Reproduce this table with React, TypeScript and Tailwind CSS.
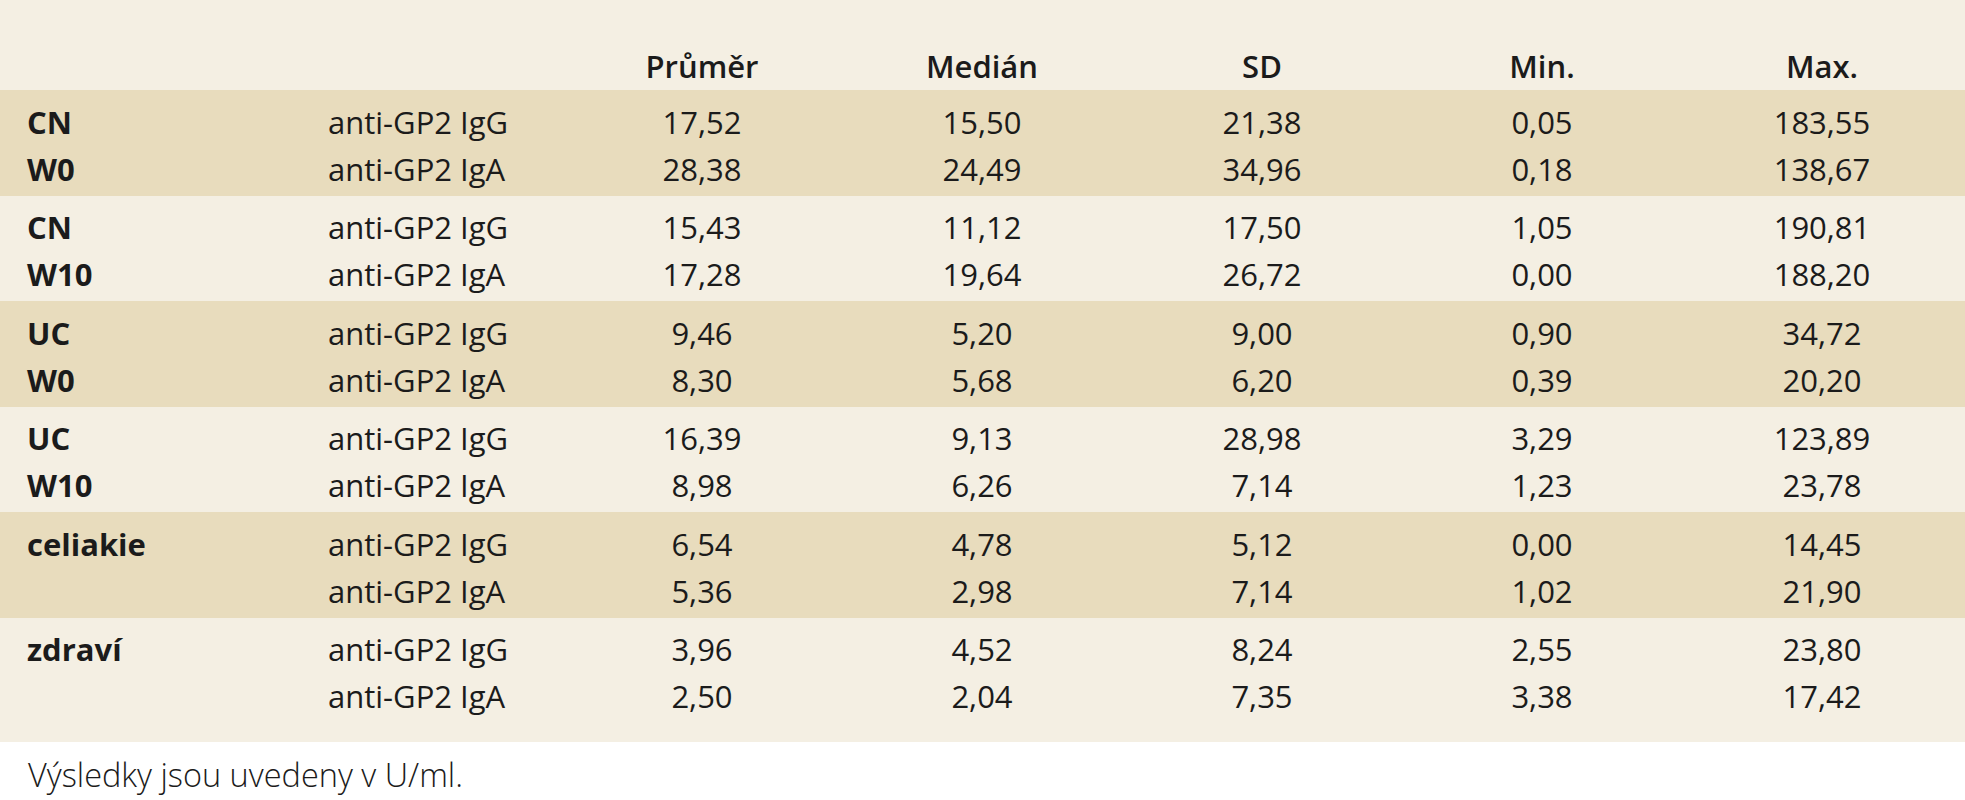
import React from "react";

type Group = { labels: [string, string]; rows: [string[], string[]] };

const groups: Group[] = [
  { labels: ["CN", "W0"], rows: [["17,52", "15,50", "21,38", "0,05", "183,55"], ["28,38", "24,49", "34,96", "0,18", "138,67"]] },
  { labels: ["CN", "W10"], rows: [["15,43", "11,12", "17,50", "1,05", "190,81"], ["17,28", "19,64", "26,72", "0,00", "188,20"]] },
  { labels: ["UC", "W0"], rows: [["9,46", "5,20", "9,00", "0,90", "34,72"], ["8,30", "5,68", "6,20", "0,39", "20,20"]] },
  { labels: ["UC", "W10"], rows: [["16,39", "9,13", "28,98", "3,29", "123,89"], ["8,98", "6,26", "7,14", "1,23", "23,78"]] },
  { labels: ["celiakie", ""], rows: [["6,54", "4,78", "5,12", "0,00", "14,45"], ["5,36", "2,98", "7,14", "1,02", "21,90"]] },
  { labels: ["zdraví", ""], rows: [["3,96", "4,52", "8,24", "2,55", "23,80"], ["2,50", "2,04", "7,35", "3,38", "17,42"]] },
];

const headers = ["Průměr", "Medián", "SD", "Min.", "Max."];
const antibodies = ["anti-GP2 IgG", "anti-GP2 IgA"];

const gridCols = "grid grid-cols-[328px_234px_280px_280px_280px_280px_280px]";

export default function App() {
  return (
    <div
      className="w-[1965px] h-[800px] bg-white text-[#1b1b1b] text-[31px] leading-[47px] overflow-hidden"
      style={{ fontFamily: '"Open Sans", "Noto Sans", sans-serif' }}
    >
      <div className="bg-[#f4efe3] pt-[43px]">
        <div className={`${gridCols} h-[47px] font-semibold`}>
          <div />
          <div />
          {headers.map((h) => (
            <div key={h} className="text-center">
              {h}
            </div>
          ))}
        </div>
      </div>
      {groups.map((g, gi) => (
        <div
          key={gi}
          className={`${gi % 2 === 0 ? "bg-[#e8dcbd]" : "bg-[#f4efe3]"} pt-[8.5px] ${
            gi === groups.length - 1 ? "pb-[21.5px]" : "pb-[3px]"
          }`}
        >
          {g.rows.map((r, ri) => (
            <div key={ri} className={`${gridCols} h-[47px]`}>
              <div className="pl-[27px] font-bold">{g.labels[ri]}</div>
              <div>{antibodies[ri]}</div>
              {r.map((v, vi) => (
                <div key={vi} className="text-center">
                  {v}
                </div>
              ))}
            </div>
          ))}
        </div>
      ))}
      <div className="pt-[9px] pl-[28px] font-light text-[32.5px]">Výsledky jsou uvedeny v U/ml.</div>
    </div>
  );
}
